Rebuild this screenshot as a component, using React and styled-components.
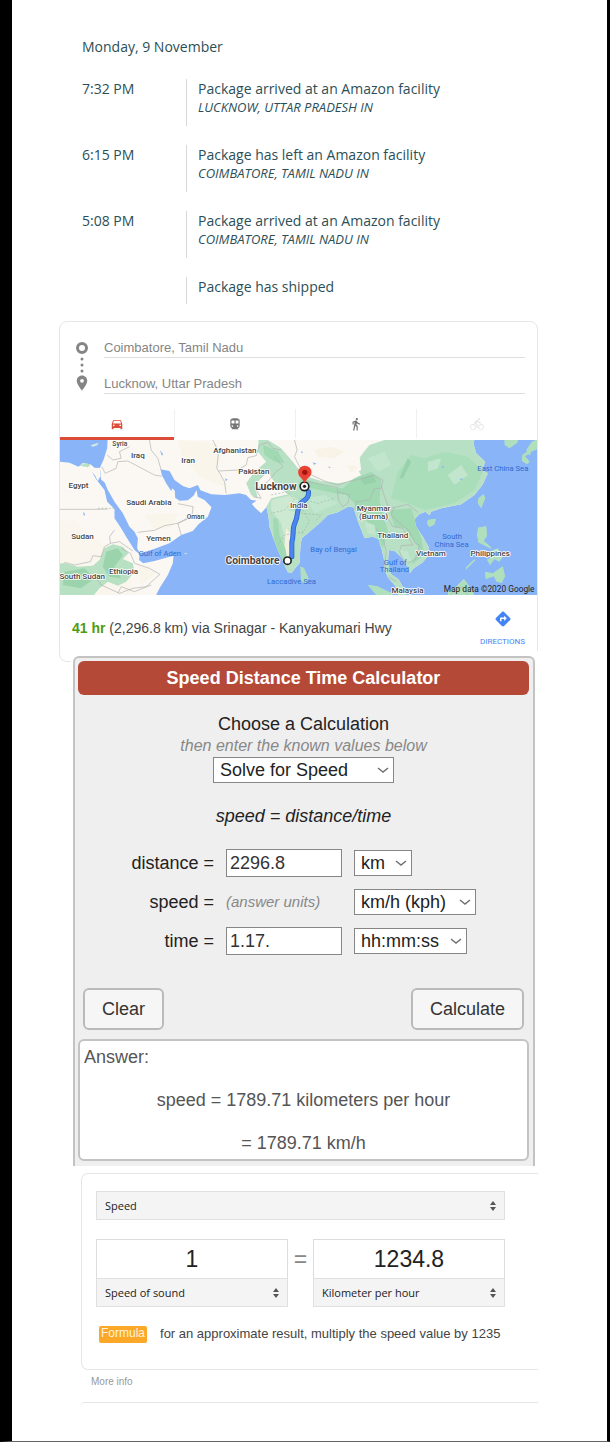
import React, { useState } from 'react'
import styled, { createGlobalStyle } from 'styled-components'
import {
  MdDirections,
  MdDirectionsBike,
  MdDirectionsCar,
  MdDirectionsSubway,
  MdDirectionsWalk,
  MdPlace
} from 'react-icons/md'

const GlobalStyle = createGlobalStyle`
  * {
    box-sizing: border-box;
  }

  body {
    margin: 0;
    background: #fff;
    font-family: 'Liberation Sans', Arial, sans-serif;
  }

  input, select, button {
    margin: 0;
    font-family: inherit;
  }
`

const PageMain = styled.main`
  min-height: 100vh;
  padding: 38px 69px 0 47px;
  border-left: 12px solid #000;
  border-right: 3px solid #000;
  border-bottom: 1px solid #666;
`

/* tracking */

const TrackingSection = styled.section`
  padding-left: 23px;
  color: #2b4f57;
  font-family: 'Open Sans', 'Noto Sans', sans-serif;
  font-size: 14px;
  line-height: 18px;
`

const DateHeading = styled.h2`
  margin: 0 0 23px;
  font-size: 14px;
  font-weight: 400;
  line-height: 18px;
`

const EventList = styled.ul`
  display: grid;
  gap: 19px;
  margin: 0;
  padding: 0;
  list-style: none;
`

const EventRow = styled.li`
  display: grid;
  grid-template-columns: 104px 1fr;
  min-height: ${props => (props.$short ? '27px' : '47px')};
`

const EventBody = styled.div`
  padding-left: 11px;
  border-left: 1px solid #d5d9d9;
`

const EventTime = styled.time`
  padding-top: 1px;
`

const EventTitle = styled.div`
  padding-top: 1px;
`

const EventPlace = styled.div`
  font-size: 13px;
  font-style: italic;
`

/* route card */

const RouteCard = styled.section`
  height: 341px;
  margin-top: 17px;
  border: 1px solid #e6e6e6;
  border-radius: 8px;
`

const RouteForm = styled.div`
  display: grid;
  grid-template-columns: 44px 1fr;
  padding: 16px 12px 15px 0;
`

const RouteMarks = styled.div`
  display: flex;
  flex-direction: column;
  align-items: center;
  padding-top: 4px;
  color: #858585;
`

const StopList = styled.div`
  display: grid;
  gap: 16px;
`

const StopInput = styled.input`
  width: 100%;
  height: 20px;
  padding: 0;
  border: 0;
  border-bottom: 1px solid #dedede;
  background: none;
  color: #858585;
  font-size: 13px;
`

const ModeTabs = styled.div`
  display: grid;
  grid-template-columns: 114px 1fr 1fr 1fr;
  height: 31px;
`

const ModeButton = styled.button`
  display: flex;
  align-items: center;
  justify-content: center;
  padding: 2px 0 0;
  border: 0;
  border-left: 1px solid #f0f0f0;
  border-bottom: 3px solid ${props => (props.$active ? '#dd4b39' : 'transparent')};
  background: none;
  color: ${props => (props.$active ? '#dd4b39' : props.$muted ? '#e6e6e6' : '#757575')};

  &:first-child {
    border-left: 0;
  }
`

const MapSvg = styled.svg`
  display: block;
  width: 100%;
  height: 155px;
`

const RouteFooter = styled.div`
  display: flex;
  align-items: center;
  justify-content: space-between;
  height: 66px;
  padding: 0 12px;
  color: #444;
  font-size: 14px;
`

const Duration = styled.b`
  color: #4b9c12;
`

const DirectionsLink = styled.a`
  display: flex;
  flex-direction: column;
  align-items: center;
  gap: 9px;
  color: #4285f4;
  font-family: Roboto, sans-serif;
  font-size: 8px;
  line-height: 10px;
  text-decoration: none;
`

/* calculator */

const CalculatorWrap = styled.section`
  position: relative;
  margin: -11px 0 0 12px;
  padding: 5px 3px 0 2px;
  background: #fff;
`

const CalculatorPanel = styled.div`
  padding: 3px 4px 5px 3px;
  border: 2px solid #c3c3c3;
  border-bottom: 0;
  border-radius: 6px 6px 0 0;
  background: #efefef;
  color: #222;
  font-size: 18px;
  line-height: 22px;
  text-align: center;
`

const CalculatorTitle = styled.h1`
  margin: 0;
  border-radius: 6px;
  background: #b54938;
  color: #fff;
  font-size: 18px;
  line-height: 34px;
`

const ChooseLabel = styled.label`
  display: block;
  margin-top: 18px;
`

const Hint = styled.div`
  color: #888;
  font-size: ${props => (props.$size === 'small' ? '15px' : '16px')};
  font-style: italic;
`

const FormulaLine = styled.div`
  margin: 22px 0;
  font-style: italic;
`

const FieldGrid = styled.div`
  display: grid;
  grid-template-columns: 136px 116px 1fr;
  grid-auto-rows: 28px;
  gap: 11px 12px;
  align-items: center;
  text-align: left;
`

const FieldLabel = styled.label`
  text-align: right;
`

const ValueInput = styled.input`
  width: 100%;
  height: 28px;
  padding: 0 3px;
  border: 1px solid #868686;
  border-radius: 0;
  background: #fff;
  color: #333;
  font-size: 18px;
`

const SelectBox = styled.span`
  position: relative;
  display: inline-block;
  width: ${props => props.$width};
  color: ${props => (props.$flat ? '#555' : '#707070')};
  vertical-align: top;

  svg {
    position: absolute;
    top: 50%;
    right: ${props => (props.$flat ? '8px' : '4px')};
    transform: translateY(-50%);
    pointer-events: none;
  }
`

const CalcSelect = styled.select`
  display: block;
  width: 100%;
  height: 26px;
  padding: 0 6px;
  border: 1px solid #868686;
  border-radius: 0;
  appearance: none;
  background: #fff;
  color: #222;
  font-size: 18px;
`

const ActionBar = styled.div`
  display: flex;
  justify-content: space-between;
  padding: 33px 5px 9px;
`

const ActionButton = styled.button`
  height: 42px;
  padding: 0 17px;
  border: 2px solid #bababa;
  border-radius: 6px;
  background: #f6f6f6;
  color: #333;
  font-size: 18px;
`

const AnswerBox = styled.div`
  display: grid;
  gap: 21px;
  padding: 5px 4px;
  border: 2px solid #c3c3c3;
  border-radius: 6px;
  background: #fff;
  color: #555;
`

const AnswerHeading = styled.div`
  text-align: left;
`

/* unit converter */

const ConverterCard = styled.section`
  margin: 7px 0 0 22px;
  padding: 17px 33px 26px 14px;
  border: 1px solid #e6e6e6;
  border-right: 0;
  border-radius: 7px 0 0 7px;
`

const UnitSelect = styled.select`
  display: block;
  width: 100%;
  height: 29px;
  padding: 0 8px;
  border: 1px solid #e0e0e0;
  border-radius: 0;
  appearance: none;
  background: #f4f4f4;
  color: #222;
  font-family: 'Open Sans', 'Noto Sans', sans-serif;
  font-size: 11px;
`

const ConversionRow = styled.div`
  display: grid;
  grid-template-columns: 1fr 25px 1fr;
  margin: 19px 0 18px;
`

const AmountInput = styled.input`
  display: block;
  width: 100%;
  height: 39px;
  padding: 0;
  border: 1px solid #dcdcdc;
  border-bottom: 0;
  border-radius: 0;
  background: #fff;
  color: #222;
  font-size: 23px;
  text-align: center;
`

const EqualsSign = styled.span`
  color: #888;
  font-size: 23px;
  line-height: 40px;
  text-align: center;
`

const FormulaRow = styled.div`
  display: flex;
  align-items: center;
  gap: 13px;
  padding-left: 3px;
  color: #444;
  font-size: 13px;
  line-height: 18px;
`

const FormulaBadge = styled.span`
  padding: 0 2px 2px;
  border-radius: 2px;
  background: #fba828;
  color: #fff3d9;
  font-size: 12px;
  line-height: 15px;
`

const MoreInfoLink = styled.a`
  display: block;
  margin-left: 32px;
  padding: 5px 0 13px;
  color: #999;
  font-size: 10px;
  line-height: 14px;
  text-decoration: none;
`

const NextCard = styled.div`
  height: 4px;
  margin-left: 22px;
  border-top: 1px solid #e6e6e6;
  border-top-left-radius: 7px;
`

const events = [
  { time: '7:32 PM', title: 'Package arrived at an Amazon facility', place: 'LUCKNOW, UTTAR PRADESH IN' },
  { time: '6:15 PM', title: 'Package has left an Amazon facility', place: 'COIMBATORE, TAMIL NADU IN' },
  { time: '5:08 PM', title: 'Package arrived at an Amazon facility', place: 'COIMBATORE, TAMIL NADU IN' },
  { title: 'Package has shipped' }
]

const modes = [
  { id: 'car', label: 'Driving', icon: MdDirectionsCar },
  { id: 'train', label: 'Transit', icon: MdDirectionsSubway },
  { id: 'walk', label: 'Walking', icon: MdDirectionsWalk },
  { id: 'bike', label: 'Cycling', icon: MdDirectionsBike, muted: true }
]

// x, y, text, size
const countries = [
  [196, 33, 'Syria', 20],
  [250, 70, 'Iraq', 24],
  [401, 83, 'Iran', 24],
  [541, 55, 'Afghanistan', 24],
  [598, 116, 'Pakistan', 24],
  [72, 160, 'Egypt', 24],
  [283, 210, 'Saudi Arabia', 24],
  [423, 251, 'Oman', 20],
  [84, 312, 'Sudan', 24],
  [312, 319, 'Yemen', 24],
  [207, 417, 'Ethiopia', 24],
  [83, 431, 'South Sudan', 24],
  [733, 219, 'India', 24],
  [957, 229, 'Myanmar', 24],
  [957, 252, '(Burma)', 24],
  [1015, 310, 'Thailand', 24],
  [1129, 364, 'Vietnam', 24],
  [1307, 364, 'Philippines', 24],
  [1059, 474, 'Malaysia', 24]
]

const waters = [
  [316, 363, 'Gulf of Aden', 23],
  [837, 350, 'Bay of Bengal', 23],
  [711, 447, 'Laccadive Sea', 23],
  [1345, 108, 'East China Sea', 23],
  [1193, 312, 'South', 23],
  [1191, 336, 'China Sea', 23],
  [1022, 391, 'Gulf of', 23],
  [1020, 411, 'Thailand', 23]
]

const AFRICA =
  'M0 80L15 80L45 83L72 95L85 84L108 88L120 98L136 99L140 120L130 138L122 122L112 110L125 133L150 165L158 200L180 222L180 250L200 280L215 305L240 345L255 358L254 375L266 385L300 378L357 362L355 385L340 420L315 460L300 490L0 490Z'
const ASIA =
  'M160 0L158 40L148 72L136 99L140 134L150 142L160 165L180 200L205 235L225 275L240 290L250 310L248 340L256 355L290 345L345 325L380 300L415 288L432 268L460 245L471 217L450 195L430 185L426 165L417 182L400 196L375 197L362 188L361 168L354 160L350 168L335 145L322 120L318 103L345 108L360 135L385 153L405 160L430 150L438 166L470 178L510 180L555 175L575 180L590 195L606 197L592 207L603 220L620 235L636 216L642 245L645 275L655 305L670 345L688 385L700 412L712 413L720 402L735 385L738 330L742 310L765 290L795 265L820 240L850 232L880 215L897 217L910 258L930 309L955 305L972 312L982 345L990 380L988 400L1000 427L1022 452L1035 490L1060 490L1045 455L1032 433L1010 418L1000 385L1003 345L1020 348L1040 365L1060 395L1066 414L1078 400L1105 382L1121 362L1122 335L1105 305L1085 275L1080 253L1095 237L1113 230L1125 241L1130 230L1160 220L1220 208L1260 180L1285 148L1300 115L1283 105L1292 80L1265 55L1258 30L1260 0Z'
const ISLANDS =
  'M738 395L748 399L762 430L753 444L740 440ZM1120 255L1144 251L1140 268L1125 276L1118 266ZM1272 190L1287 178L1292 190L1280 219L1270 205ZM1271 278L1295 274L1297 303L1287 318L1307 334L1312 343L1288 330L1272 322L1268 300ZM1308 348L1330 340L1345 365L1335 380L1320 372L1306 390L1298 374L1315 365ZM1292 410L1315 415L1345 394L1352 424L1342 444L1326 440L1318 424L1294 432ZM1263 374L1233 405L1236 396L1258 374ZM1178 490L1182 468L1205 455L1228 432L1238 445L1255 470L1262 490ZM940 450L968 454L1010 474L1022 490L975 490ZM1350 15L1392 12L1388 24L1365 40L1350 30ZM1403 60L1420 48L1425 56L1412 64L1426 80L1418 88L1402 78ZM1415 45L1432 20L1455 10L1455 40L1430 50L1426 62Z'

const WorldMap = () => (
  <MapSvg viewBox="15 15 1434 465" preserveAspectRatio="xMidYMid slice" role="img" aria-label="Route map">
    <defs>
      <clipPath id="land">
        <path d={AFRICA + ASIA + ISLANDS} />
      </clipPath>
    </defs>
    <rect width="1470" height="500" fill="#8ab4f8" />
    <path d={AFRICA + ASIA} fill="#fbf8f3" />
    <g clipPath="url(#land)">
      <path d="M0 260L60 255L110 300L150 330L220 350L240 500L0 500Z" fill="#faf6ee" />
      <path d="M370 15L480 25L500 60L490 110L520 160L440 130L380 60ZM270 240L370 235L350 280L300 285ZM250 390L310 410L260 450Z" fill="#f9f5eb" />
      <path d="M0 388L30 384L70 395L115 392L135 375L150 340L175 328L205 335L222 355L205 372L235 385L240 410L215 440L190 452L160 440L135 460L110 490L0 490Z" fill="#b8e0c2" />
      <path d="M30 410L90 400L120 430L80 460L25 450ZM155 350L190 340L205 360L180 395L200 430L165 425L145 395Z" fill="#9bd4ac" />
      <path d="M75 92L92 83L110 88L100 97ZM612 15L640 15L680 40L715 80L730 100L760 125L800 138L850 145L880 140L920 120L900 90L925 55L945 30L990 15L1300 0L1300 500L950 500L890 240L850 500L680 430L640 280L630 225L650 190L700 178L665 150L640 110L600 150L610 190L590 180L575 145L600 110L635 80L610 50Z" fill="#b8e0c5" />
      <path d="M625 30L670 48L690 85L660 80L630 60ZM655 250L670 250L675 300L695 345L690 400L660 340ZM740 130L840 160L880 160L870 180L770 160L730 150ZM860 165L900 130L950 110L980 135L975 200L990 250L1000 290L985 340L960 290L930 250L900 205ZM1005 225L1070 220L1100 310L1110 360L1070 390L1095 340L1050 280L1020 275ZM1200 450L1240 445L1250 490L1200 490ZM1290 350L1320 350L1350 420L1320 430Z" fill="#a1d9b3" />
      <path d="M1030 110L1070 60L1110 70L1170 50L1240 65L1285 110L1260 165L1200 205L1110 225L1060 205L1010 190Z" fill="#aaddba" />
      <path d="M940 70L990 50L1010 90L970 110ZM1120 80L1160 70L1150 100L1120 110ZM1180 120L1220 90L1240 120L1200 150ZM755 190L810 180L850 205L780 235ZM930 260L960 270L965 300L940 295ZM1030 340L1060 350L1070 380L1045 370Z" fill="#c2e6cd" />
      <path d="M1035 130L1060 70L1070 80L1045 130ZM915 130L955 118L965 140L930 150Z" fill="#96d1a9" />
      <path d="M690 15L960 0L930 40L915 65L920 105L880 130L800 130L760 105L730 80L705 55Z" fill="#fbf8f3" />
      <path d="M650 195L710 180L735 200L700 225L740 235L720 270L715 330L690 310L680 265L650 225Z" fill="#cde9d2" />
      <path d="M695 280L712 300L716 350L700 375L690 330Z" fill="#f3f0df" />
      <path d="M780 45L830 35L870 50L840 70L790 65ZM880 90L910 95L890 115Z" fill="#f8f3e6" />
    </g>
    <path d={ISLANDS} fill="#b0dfbe" />
    <g fill="#8ab4f8">
      <path d="M86 230L92 238L88 244ZM316 45L326 58L322 62ZM820 95L828 96L826 100ZM775 82L786 86L778 89ZM740 48L746 52L741 55ZM512 130L520 134L513 138Z" />
      <path d="M1160 95L1166 92L1168 100ZM1215 132L1226 130L1220 136Z" />
    </g>
    <path d="M108 31L132 23L128 31L115 35ZM390 353L400 356L391 358Z" fill="#d5ebdc" />
    <g fill="none" stroke="#b0b0b0" strokeWidth="2">
      <path d="M15 223H130L160 222M158 60L175 75L200 70L195 50L225 35M142 95L152 115L185 100L190 80L220 78L262 100L300 120L322 124M285 15L290 45L310 70L320 105" />
      <path d="M250 292L300 286L330 272L370 265L380 300M370 265L412 242L416 215L370 206M370 265L430 238" />
      <path d="M180 285L165 305L168 325L150 335L140 365L115 362L108 380L60 390L30 382M168 325L195 320L235 348M200 340L228 355L240 385L285 400L316 418L275 455L235 460L195 475L140 450L125 430L90 430M190 475L200 455L240 470L290 450" />
      <path d="M475 15L492 50L487 100L510 140L515 175M492 108L550 105L575 90L580 68L605 62L615 30L640 22L655 40L680 45M595 185L620 190L605 165L640 140L665 110L685 95L660 65" />
      <path d="M720 15L728 45L720 65L735 95L760 115L810 138L850 150L880 140L920 132L958 120L985 135L980 160L960 160L945 195L905 200L900 225M735 110L760 140L850 158M848 160L852 195L865 215L880 205L885 180L850 170" />
      <path d="M980 150L990 185L1000 212L1018 218L1010 240L1030 260L1062 285L1082 325L1095 330L1083 372L1060 385M1018 218L1060 208L1090 232M975 255L1000 250L1015 275L1045 280L1075 330L1040 332L1035 350L1050 380M965 280L985 305L995 350L990 395M1002 425L1025 440M1185 480L1220 455L1240 480" />
    </g>
    <g fill="none" stroke="#9fb8a6" strokeWidth="2" strokeDasharray="6 5">
      <path d="M650 180L700 170L720 195L690 225L650 235M735 190L790 205L840 190M740 235L800 240L780 260M670 330L690 300L750 290M745 225L765 260L740 300M130 220H180" />
    </g>
    <path d="M762 170C764 192 748 194 738 206C726 224 732 240 722 262C712 280 719 300 712 322L712 365" fill="none" stroke="#2a66d0" strokeWidth="15" strokeLinecap="round" strokeLinejoin="round" />
    <path d="M762 170C764 192 748 194 738 206C726 224 732 240 722 262C712 280 719 300 712 322L712 365" fill="none" stroke="#4c87ee" strokeWidth="10" strokeLinecap="round" strokeLinejoin="round" />
    <g fontFamily="Roboto, sans-serif" textAnchor="middle">
      <g fill="#2f6bd0">
        {waters.map(([x, y, text, size]) => (
          <text key={x} x={x} y={y} fontSize={size}>{text}</text>
        ))}
      </g>
      <g fill="#444" fontWeight="500" stroke="#fff" strokeWidth="5" strokeLinejoin="round" paintOrder="stroke">
        {countries.map(([x, y, text, size]) => (
          <text key={text} x={x} y={y} fontSize={size}>{text}</text>
        ))}
        <text x="664" y="164" fontSize="31" fontWeight="700">Lucknow</text>
        <text x="594" y="387" fontSize="31" fontWeight="700">Coimbatore</text>
      </g>
      <text x="1304" y="470" fontSize="25" fill="#222">Map data ©2020 Google</text>
    </g>
    <circle cx="699" cy="377" r="11" fill="#fff" stroke="#222" strokeWidth="5" />
    <circle cx="750" cy="154" r="13" fill="#fff" stroke="#222" strokeWidth="5" />
    <circle cx="750" cy="154" r="5" fill="#222" />
    <path d="M750 147C747 130 731 127 731 112A20 20 0 0 1 771 112C771 127 753 130 750 147Z" fill="#ea4335" />
    <circle cx="751" cy="112" r="8" fill="#a5150f" />
  </MapSvg>
)

const Chevron = () => (
  <svg width="14" height="8" viewBox="0 0 14 8" fill="none" stroke="currentColor" strokeWidth="1.5">
    <path d="M2 2l5 4 5-4" />
  </svg>
)

const Sorter = () => (
  <svg width="8" height="10" viewBox="0 0 8 10" fill="currentColor">
    <path d="M1 4l3-4 3 4zM1 6h6l-3 4z" />
  </svg>
)

const CalcPicker = ({ id, label, value, width }) => (
  <SelectBox $width={width}>
    <CalcSelect id={id} aria-label={label} defaultValue={value}>
      <option>{value}</option>
    </CalcSelect>
    <Chevron />
  </SelectBox>
)

const UnitPicker = ({ label, value }) => (
  <SelectBox $flat $width="100%">
    <UnitSelect aria-label={label} defaultValue={value}>
      <option>{value}</option>
    </UnitSelect>
    <Sorter />
  </SelectBox>
)

const Tracking = () => (
  <TrackingSection>
    <DateHeading>Monday, 9 November</DateHeading>
    <EventList>
      {events.map((event, index) => (
        <EventRow key={index} $short={!event.place}>
          <EventTime>{event.time}</EventTime>
          <EventBody>
            <EventTitle>{event.title}</EventTitle>
            {event.place && <EventPlace>{event.place}</EventPlace>}
          </EventBody>
        </EventRow>
      ))}
    </EventList>
  </TrackingSection>
)

const Route = () => {
  const [mode, setMode] = useState('car')

  return (
    <RouteCard>
      <RouteForm>
        <RouteMarks>
          <svg width="12" height="32" viewBox="0 0 12 32" fill="currentColor">
            <circle cx="6" cy="6" r="4.5" fill="none" stroke="currentColor" strokeWidth="3" />
            <circle cx="6" cy="17" r="1.5" />
            <circle cx="6" cy="23" r="1.5" />
            <circle cx="6" cy="29" r="1.5" />
          </svg>
          <MdPlace size={18} />
        </RouteMarks>
        <StopList>
          <StopInput aria-label="From" defaultValue="Coimbatore, Tamil Nadu" />
          <StopInput aria-label="To" defaultValue="Lucknow, Uttar Pradesh" />
        </StopList>
      </RouteForm>
      <ModeTabs>
        {modes.map(({ id, label, icon: Icon, muted }) => (
          <ModeButton
            key={id}
            type="button"
            aria-label={label}
            $active={mode === id}
            $muted={muted}
            onClick={() => setMode(id)}
          >
            <Icon size={14} />
          </ModeButton>
        ))}
      </ModeTabs>
      <WorldMap />
      <RouteFooter>
        <span>
          <Duration>41 hr</Duration> (2,296.8 km) via Srinagar - Kanyakumari Hwy
        </span>
        <DirectionsLink href="#directions">
          <MdDirections size={18} />
          DIRECTIONS
        </DirectionsLink>
      </RouteFooter>
    </RouteCard>
  )
}

const Calculator = () => (
  <CalculatorWrap>
    <CalculatorPanel>
      <CalculatorTitle>Speed Distance Time Calculator</CalculatorTitle>
      <ChooseLabel htmlFor="calculation">Choose a Calculation</ChooseLabel>
      <Hint>then enter the known values below</Hint>
      <CalcPicker id="calculation" value="Solve for Speed" width="181px" />
      <FormulaLine>speed = distance/time</FormulaLine>
      <FieldGrid>
        <FieldLabel htmlFor="distance">distance =</FieldLabel>
        <ValueInput id="distance" defaultValue="2296.8" />
        <CalcPicker label="Distance unit" value="km" width="58px" />
        <FieldLabel htmlFor="speed-unit">speed =</FieldLabel>
        <Hint $size="small">(answer units)</Hint>
        <CalcPicker id="speed-unit" value="km/h (kph)" width="122px" />
        <FieldLabel htmlFor="time">time =</FieldLabel>
        <ValueInput id="time" defaultValue="1.17." />
        <CalcPicker label="Time format" value="hh:mm:ss" width="113px" />
      </FieldGrid>
      <ActionBar>
        <ActionButton type="button">Clear</ActionButton>
        <ActionButton type="button">Calculate</ActionButton>
      </ActionBar>
      <AnswerBox>
        <AnswerHeading>Answer:</AnswerHeading>
        <div>speed = 1789.71 kilometers per hour</div>
        <div>= 1789.71 km/h</div>
      </AnswerBox>
    </CalculatorPanel>
  </CalculatorWrap>
)

const Converter = () => (
  <>
    <ConverterCard>
      <UnitPicker label="Quantity" value="Speed" />
      <ConversionRow>
        <div>
          <AmountInput aria-label="From amount" defaultValue="1" />
          <UnitPicker label="From unit" value="Speed of sound" />
        </div>
        <EqualsSign>=</EqualsSign>
        <div>
          <AmountInput aria-label="To amount" defaultValue="1234.8" />
          <UnitPicker label="To unit" value="Kilometer per hour" />
        </div>
      </ConversionRow>
      <FormulaRow>
        <FormulaBadge>Formula</FormulaBadge>
        <span>for an approximate result, multiply the speed value by 1235</span>
      </FormulaRow>
    </ConverterCard>
    <MoreInfoLink href="#more">More info</MoreInfoLink>
    <NextCard />
  </>
)

const App = () => (
  <PageMain>
    <GlobalStyle />
    <Tracking />
    <Route />
    <Calculator />
    <Converter />
  </PageMain>
)

export default App
